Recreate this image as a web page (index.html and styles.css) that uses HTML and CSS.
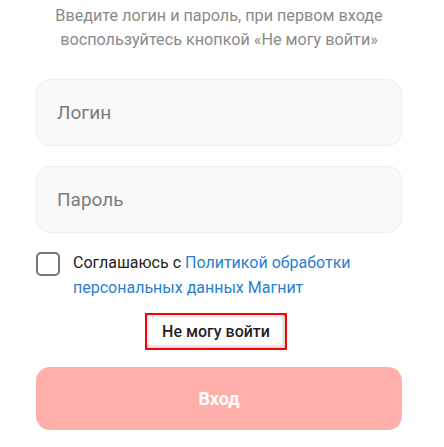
FILE: index.html
```html
<!DOCTYPE html>
<html lang="ru">
<head>
<meta charset="utf-8">
<link rel="stylesheet" href="styles.css">
</head>
<body>
<div class="form">
  <p class="intro">Введите логин и пароль, при первом входе воспользуйтесь кнопкой «Не могу войти»</p>
  <div class="field"><span class="placeholder">Логин</span></div>
  <div class="field"><span class="placeholder">Пароль</span></div>
  <div class="agree">
    <span class="box"></span>
    <p class="agree-text">Соглашаюсь с <a class="link">Политикой обработки персональных данных Магнит</a></p>
  </div>
  <div class="cant-wrap"><span class="cant">Не могу войти</span></div>
  <div class="submit">Вход</div>
</div>
</body>
</html>
```
FILE: styles.css
```css
html, body {
  margin: 0;
  padding: 0;
  background: #fff;
}
body {
  font-family: Roboto, "Liberation Sans", sans-serif;
  width: 444px;
  height: 447px;
  overflow: hidden;
}
.form {
  padding: 4px 42px 0 36px;
  display: flex;
  flex-direction: column;
}
.intro {
  margin: 0;
  text-align: center;
  color: #8a8a8a;
  font-size: 16.2px;
  line-height: 24px;
}
.field {
  margin-top: 27px;
  height: 65px;
  border: 1px solid #efefef;
  border-radius: 14px;
  background: #f9f9f9;
  display: flex;
  align-items: center;
  padding-left: 20px;
}
.field + .field {
  margin-top: 20px;
}
.placeholder {
  font-size: 19px;
  color: #7c7c7c;
}
.agree {
  margin-top: 17px;
  display: flex;
  gap: 13px;
  align-items: flex-start;
}
.box {
  flex: none;
  width: 20px;
  height: 20px;
  margin-top: 2px;
  border: 2px solid #777;
  border-radius: 5px;
}
.agree-text {
  margin: 0;
  font-size: 16px;
  line-height: 25px;
  color: #222;
}
.link {
  color: #2a7fcf;
}
.cant-wrap {
  margin-top: 13px;
  display: flex;
  justify-content: center;
}
.cant {
  display: block;
  width: 138px;
  height: 33px;
  margin-right: 6px;
  border: 2px solid #f00;
  box-shadow: inset -2px -2px 3px rgba(0,0,0,0.18), inset 2px 2px 2px rgba(0,0,0,0.08);
  text-align: center;
  line-height: 33px;
  font-size: 16px;
  font-weight: 500;
  color: #1f1f1f;
}
.submit {
  margin-top: 17px;
  height: 63px;
  border-radius: 14px;
  background: #ffaea9;
  color: #fff;
  font-size: 18px;
  font-weight: 700;
  display: flex;
  align-items: center;
  justify-content: center;
}
```
